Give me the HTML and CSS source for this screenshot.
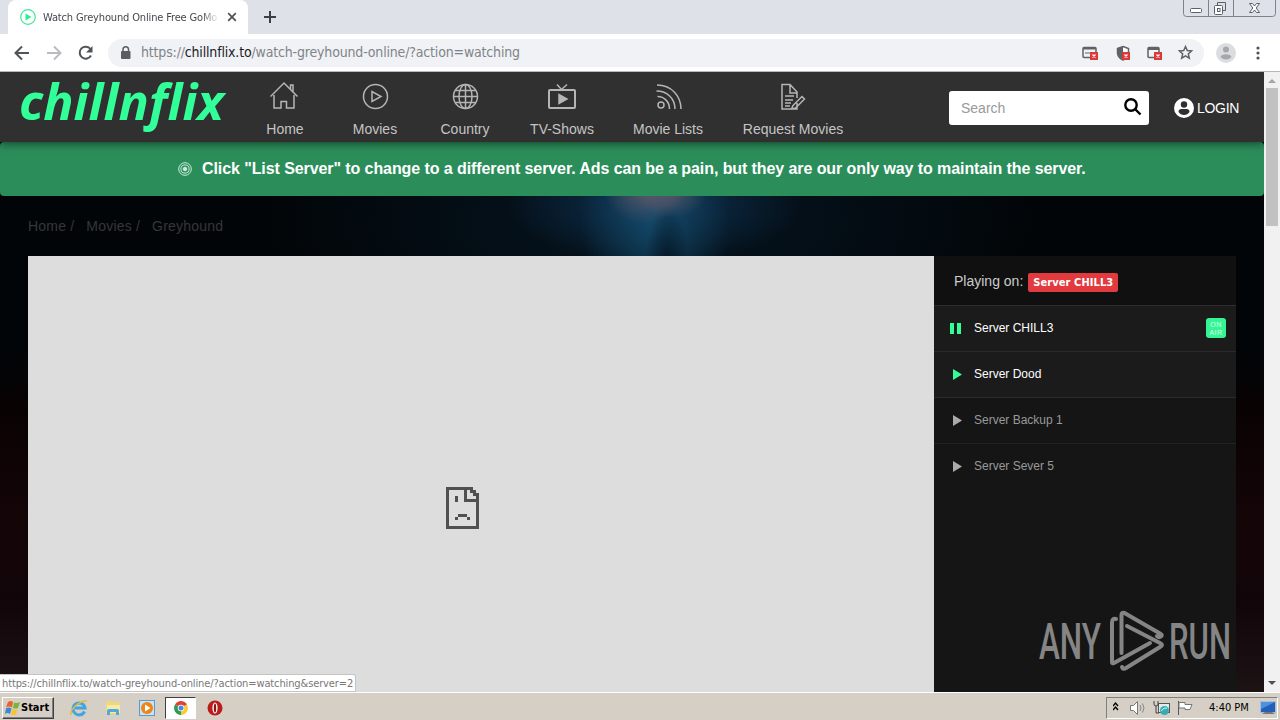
FILE: index.html
```
<!DOCTYPE html>
<html lang="en">
<head>
  <meta charset="UTF-8" />
  <meta name="viewport" content="width=device-width, initial-scale=1.0"/>
  <title>Watch Greyhound Online Free GoMovies</title>
  <link rel="stylesheet" href="styles.css">
</head>
<body>
  <!-- Tabs -->
  <div class="tabbar">
    <div class="tab">
      <svg width="16" height="16" viewBox="0 0 16 16"><circle cx="8" cy="8" r="7.3" fill="#fff" stroke="#3fe89a" stroke-width="1.2"/><path d="M5.500 4.500l6 3.500-6 3.500z" fill="#2bef94"/></svg>
      <span class="tab-title">Watch Greyhound Online Free GoMo</span>
      <svg class="tab-close" width="10" height="10" viewBox="0 0 10 10"><path d="M1.200 1.200l7.600 7.600M8.800 1.200L1.200 8.800" stroke="#50545a" stroke-width="1.800"/></svg>
    </div>
    <svg class="new-tab" width="12" height="12" viewBox="0 0 12 12"><path d="M6 0v12M0 6h12" stroke="#3c4043" stroke-width="2"/></svg>
    <svg class="window-buttons" width="94" height="18" viewBox="0 0 94 18" fill="none" stroke="#7d828b">
      <path d="M.5 0v13.500q0 3 3 3h86q3 0 3-3V0M25.500 0v16M50.500 0v16"/>
      <g stroke="#5b6069"><rect x="7.500" y="8.500" width="11" height="4" rx="1" fill="#fff"/><path d="M34.500 5.500V2.500h8v8h-3" /><rect x="31.500" y="5.500" width="8" height="9" rx="1" fill="#fff"/><rect x="34.500" y="8.500" width="2.500" height="3"/><path d="M66.500 3.500h3l2 2.500 2-2.500h3l-3.300 4.500 3.300 4.500h-3l-2-2.500-2 2.500h-3l3.300-4.500z" fill="#fff"/></g>
    </svg>
  </div>

  <!-- Address bar -->
  <div class="toolbar">
    <svg class="nav-buttons" width="92" height="20" viewBox="0 0 92 20" fill="none" stroke-width="2">
      <path d="M15 10H2M8 3.500L1.500 10 8 16.500" stroke="#505357"/>
      <path d="M33 10h13M40 3.500l6.500 6.500-6.500 6.500" stroke="#b9bbbe"/>
      <path d="M76.500 6A6 6 0 1 0 77 12.500" stroke="#505357"/><path d="M78.500 3v6.500h-6.500z" fill="#505357"/>
    </svg>
    <div class="address">
      <svg width="10" height="13" viewBox="0 0 10 13"><rect y="5" width="9.500" height="8" rx="1" fill="#5a5d61"/><path d="M2 6V3.500a2.750 2.750 0 0 1 5.500 0V6" fill="none" stroke="#5a5d61" stroke-width="1.500"/></svg>
      <span class="url">https://<b>chillnflix.to</b>/watch-greyhound-online/?action=watching</span>
      <svg class="address-icons" width="112" height="20" viewBox="0 0 112 20">
        <g fill="none" stroke="#5f6368" stroke-width="1.500"><rect x="1" y="4.500" width="13" height="10" rx="1"/><path d="M1 5.500h13" stroke-width="2"/><path d="M3 10h7" stroke-width="1"/><path d="M41 3.500l5.500 2v4c0 3.500-2 6-5.500 7.500-3.500-1.500-5.500-4-5.500-7.500v-4z" fill="#fff"/><rect x="66" y="4.500" width="11" height="10" rx="1"/><path d="M66 5.500h11" stroke-width="3"/></g>
        <path d="M41 3.500v13c-3.500-1.500-5.500-4-5.500-7.500v-4z" fill="#5f6368"/>
        <g fill="#d93c38"><rect x="8" y="9" width="8" height="8"/><rect x="40" y="9" width="8" height="8"/><rect x="72" y="9" width="8" height="8"/></g>
        <path d="M10.500 11.500l3 3m0-3l-3 3M42.500 11.500l3 3m0-3l-3 3M74.500 11.500l3 3m0-3l-3 3" stroke="#fff" stroke-width="1.200"/>
        <path d="M103.500 3.500l1.800 4 4.300.4-3.300 3 1 4.300-3.800-2.300-3.800 2.300 1-4.300-3.300-3 4.300-.4z" fill="none" stroke="#5f6368" stroke-width="1.500"/>
      </svg>
    </div>
    <svg class="profile" width="20" height="20" viewBox="0 0 20 20"><circle cx="10" cy="10" r="10" fill="#dcdde0"/><circle cx="10" cy="6.500" r="3" fill="#a5a7ab"/><path d="M4.500 14q1-2.800 5.500-2.800t5.500 2.800q-2.300 2.500-5.500 2.500T4.500 14z" fill="#a5a7ab"/></svg>
    <svg class="menu" width="4" height="14" viewBox="0 0 4 14" fill="#505357"><circle cx="2" cy="2" r="1.600"/><circle cx="2" cy="7" r="1.600"/><circle cx="2" cy="12" r="1.600"/></svg>
  </div>

  <div class="viewport">
    <div class="page">
      <header class="site-header">
        <svg class="logo" width="216" height="70" viewBox="0 0 216 70"><text x="1" y="48" textLength="205" lengthAdjust="spacingAndGlyphs">chillnflix</text></svg>
        <nav class="nav">
          <a class="nav-item">
            <svg width="30" height="30" viewBox="0 0 30 30"><path d="M.5 15.500L14 2 27.500 15.500M4 14v13h7V20.500h5.500v6.500H24V14M20.500 8V4H23v6.500"/></svg>
            Home
          </a>
          <a class="nav-item">
            <svg width="30" height="30" viewBox="0 0 30 30"><circle cx="15.500" cy="15.500" r="12"/><path d="M12 10.500v10l9-5z"/></svg>
            Movies
          </a>
          <a class="nav-item">
            <svg width="30" height="30" viewBox="0 0 30 30"><circle cx="15.500" cy="15.500" r="12"/><ellipse cx="15.500" cy="15.500" rx="6.500" ry="12"/><path d="M15.500 3.500v24M3.500 15.500h24M5.500 9.500h20M5.500 21.500h20"/></svg>
            Country
          </a>
          <a class="nav-item">
            <svg width="30" height="30" viewBox="0 0 30 30"><rect x="2" y="9" width="26" height="18" rx="1" stroke-width="2"/><path d="M10 3.500l4.500 5L20 3.500"/><path d="M12 13.500v9l8-4.500z" fill="#b5b5b5"/></svg>
            TV-Shows
          </a>
          <a class="nav-item">
            <svg width="30" height="30" viewBox="0 0 30 30"><circle cx="8" cy="24" r="3"/><path d="M4.500 15.500c7 0 12 5.500 12 12.500M3.500 10c11 0 18.500 8 18.500 18M4 4c14 0 24 10.500 24 24"/></svg>
            Movie Lists
          </a>
          <a class="nav-item">
            <svg width="30" height="30" viewBox="0 0 30 30"><path d="M19 22v6H4V3.500h8l7 7.500v6M12 4v8h7M7 15h9M7 19h8M7 22h6M7 25h5M15 24.500l9-9 2.500 2.500-9 9-4 1z"/></svg>
            Request Movies
          </a>
        </nav>
        <div class="search">
          <span>Search</span>
          <svg width="18" height="18" viewBox="0 0 18 18" fill="none" stroke="#000"><circle cx="7" cy="7" r="5.700" stroke-width="2.400"/><path d="M11 11l5.500 5.500" stroke-width="2.400"/></svg>
        </div>
        <div class="login">
          <svg width="20" height="20" viewBox="0 0 20 20"><circle cx="10" cy="10" r="10" fill="#fff"/><circle cx="10" cy="6.500" r="3.200" fill="#303030"/><path d="M4.500 14q0-3 3-3h5q3 0 3 3-2 3-5.500 3t-5.500-3z" fill="#303030"/></svg>
          LOGIN
        </div>
      </header>

      <div class="notice">
        <svg width="14" height="14" viewBox="0 0 14 14" fill="none" stroke="#cdeedc"><circle cx="7" cy="7" r="6.300"/><circle cx="7" cy="7" r="4.100"/><circle cx="7" cy="7" r="1.800" fill="#cdeedc"/></svg>
        <span>Click "List Server" to change to a different server. Ads can be a pain, but they are our only way to maintain the server.</span>
      </div>

      <div class="breadcrumb"><span>Home /</span><span>Movies /</span><span>Greyhound</span></div>

      <main class="watch">
        <div class="player">
          <svg width="34" height="42" viewBox="0 0 34 42" fill="#505050" shape-rendering="crispEdges">
            <path d="M0 0h27v3h3v3h3v36H0zM3 3v36h27V15H18V3zM21 3v9h9V9h-3V6h-3V3z" fill-rule="evenodd"/>
            <path d="M9 9h3v6H9zM12 27h9v3h-9zM9 30h3v3H9zM21 30h3v3h-3z"/>
          </svg>
        </div>
        <aside class="servers">
          <div class="playing">Playing on: <span class="badge">Server CHILL3</span></div>
          <div class="server active">
            <svg width="12" height="12" viewBox="0 0 12 12"><path d="M0 1h4v11H0zM7 1h4v11H7z"/></svg>
            <span>Server CHILL3</span>
            <span class="on-air">ON<br>AIR</span>
          </div>
          <div class="server active">
            <svg width="12" height="12" viewBox="0 0 12 12"><path d="M3 1v11l9-5.500z"/></svg>
            <span>Server Dood</span>
          </div>
          <div class="server">
            <svg width="12" height="12" viewBox="0 0 12 12"><path d="M3 1v11l9-5.500z"/></svg>
            <span>Server Backup 1</span>
          </div>
          <div class="server">
            <svg width="12" height="12" viewBox="0 0 12 12"><path d="M3 1v11l9-5.500z"/></svg>
            <span>Server Sever 5</span>
          </div>
        </aside>
      </main>
    </div>
    <div class="scrollbar">
      <svg width="8" height="4" viewBox="0 0 8 4"><path d="M0 4l4-4 4 4z" fill="#a3a3a3"/></svg>
      <div class="thumb"></div>
      <svg class="down" width="8" height="4" viewBox="0 0 8 4"><path d="M0 0l4 4 4-4z" fill="#505050"/></svg>
    </div>

    <div class="status">https://chillnflix.to/watch-greyhound-online/?action=watching&amp;server=2</div>

    <svg class="watermark" width="200" height="64" viewBox="0 0 200 64">
      <text x="1" y="49" textLength="62" lengthAdjust="spacingAndGlyphs">ANY</text>
      <g fill="none" stroke="#858585" stroke-width="4" stroke-linejoin="round" stroke-linecap="round">
        <path d="M78 9q-4-1-4 4v39q0 2 2 1l36-20"/>
        <path d="M83.500 43V5q0-3 3-2l35.500 20.500q3 1.500 1 3t-4-.5"/>
        <path d="M89 16l33 17q4 2 0 4L88 58q-3 2-4-1"/>
      </g>
      <text x="131" y="49" textLength="62" lengthAdjust="spacingAndGlyphs">RUN</text>
    </svg>
  </div>

  <!-- Taskbar -->
  <footer class="taskbar">
    <div class="start">
      <svg width="16" height="16" viewBox="0 0 16 16"><path d="M3 2q3-2 5 0L7 7.500q-3-2-6 0z" fill="#e9622c"/><path d="M9 2.500q3 1 6-.5l-2 6q-3 1-5 0z" fill="#75b63b"/><path d="M1 8.500q3-2 5.500 0L5 14q-3-2-5 0z" fill="#3e87d0"/><path d="M7.500 9q3 1.500 5 .500l-1.500 5q-3 1.500-5 0z" fill="#f5c52d"/></svg>
      Start
    </div>
    <div class="quick">
      <svg width="18" height="18" viewBox="0 0 18 18" fill="none"><path d="M14.500 12.500A6 6 0 1 1 15 9H5" stroke="#40a5e2" stroke-width="3"/><path d="M1 16C-1 11 10 1 17 2" stroke="#e6b93d" stroke-width="1.500"/></svg>
    </div>
    <div class="quick">
      <svg width="16" height="16" viewBox="0 0 16 16"><path d="M1 1h5l1 1h8v12H1z" fill="#eed77c"/><path d="M2 5h13v8H2z" fill="#f8eaa5"/><path d="M2 15v-4q0-2 2-2h8q2 0 2 2v4h-3v-3H5v3z" fill="#4ea9dd"/></svg>
    </div>
    <div class="quick">
      <svg width="16" height="16" viewBox="0 0 16 16"><rect x=".5" y=".5" width="15" height="15" fill="#c9e2f4" stroke="#5f9bc9"/><circle cx="8" cy="8" r="6" fill="#ef8519"/><path d="M6 4.500v7l5.500-3.500z" fill="#fff"/></svg>
    </div>
    <div class="quick current">
      <svg width="14" height="14" viewBox="0 0 14 14"><path d="M7 7L1 3.500A7 7 0 0 1 13 3.500z" fill="#df4234"/><path d="M7 7v7A7 7 0 0 1 1 3.500z" fill="#2f9b4b"/><path d="M7 7l6-3.500A7 7 0 0 1 7 14z" fill="#f6cb35"/><circle cx="7" cy="7" r="3.300" fill="#fff"/><circle cx="7" cy="7" r="2.500" fill="#4886e8"/></svg>
    </div>
    <div class="quick">
      <svg width="16" height="16" viewBox="0 0 16 16"><circle cx="8" cy="8" r="7.500" fill="#bd1b1b"/><ellipse cx="8" cy="8" rx="2.600" ry="5.500" fill="#fff"/><ellipse cx="8" cy="8" rx="1.200" ry="4.500" fill="#8e1414"/></svg>
    </div>
    <div class="tray">
      <svg width="82" height="18" viewBox="0 0 82 18" fill="none">
        <path d="M0 7l2.500-3L5 7M0 11l2.500-3L5 11" stroke="#000" stroke-width="1.400"/>
        <path d="M17.500 6.500h3l4-4v13l-4-4h-3z" fill="#fff" stroke="#777"/><path d="M27 6q2 3 0 6M29.500 4.500q3 4.500 0 9" stroke="#888"/>
        <rect x="45.500" y="4.500" width="11" height="9" fill="#dfe9ee" stroke="#555"/><path d="M41 2v3q0 2 2 2t2-2V2M43 7v7h3" stroke="#444"/><circle cx="51.500" cy="11.500" r="4.500" fill="#36adb0"/><path d="M48 12q3-4 6-3" stroke="#d6f4e8"/>
        <path d="M65.500 2v14" stroke="#555"/><path d="M66 3.500h6v2h7l-2 5h-5v-1.500h-6z" fill="#fff" stroke="#777"/>
      </svg>
      <span class="clock">4:40 PM</span>
      <svg width="16" height="14" viewBox="0 0 16 14"><rect x=".5" y=".5" width="15" height="11" fill="#245fb9" stroke="#a7bed8"/><path d="M1 1h14L1 8z" fill="#4f91dc"/><path d="M2 13l3-2h7l3 2z" fill="#777"/></svg>
    </div>
  </footer>
</body>
</html>
```
FILE: styles.css
```
* {
  box-sizing: border-box;
}

body {
  margin: 0;
  width: 1280px;
  height: 720px;
  overflow: hidden;
  display: flex;
  flex-direction: column;
  font-family: "Liberation Sans", Arial, sans-serif;
  font-size: 14px;
}

svg {
  display: block;
  flex: none;
}

/* Browser */
.tabbar {
  height: 34px;
  background: #dee1e8;
  display: flex;
  padding-left: 8px;
}

.tab {
  width: 240px;
  background: #fff;
  border-radius: 8px 8px 0 0;
  display: flex;
  align-items: center;
  padding: 0 11px 0 12px;
}

.tab-title {
  width: 176px;
  margin-left: 7px;
  overflow: hidden;
  white-space: nowrap;
  font: 11px "DejaVu Sans Condensed", "DejaVu Sans", sans-serif;
  letter-spacing: -0.15px;
  color: #45484d;
  -webkit-mask-image: linear-gradient(90deg, #000 90%, transparent);
}

.tab-close {
  margin-left: 8px;
}

.new-tab {
  margin: 11px 0 0 16px;
}

.window-buttons {
  margin: 0 3px 0 auto;
}

.toolbar {
  height: 38px;
  background: #fff;
  border-bottom: 1px solid #b5b7ba;
  display: flex;
  align-items: center;
}

.nav-buttons {
  margin-left: 14px;
}

.address {
  width: 1096px;
  height: 28px;
  margin-left: 2px;
  padding: 0 10px 0 13px;
  background: #f0f2f5;
  border-radius: 14px;
  display: flex;
  align-items: center;
}

.url {
  margin: -2px 0 0 10px;
  font: 14px "DejaVu Sans Condensed", "DejaVu Sans", sans-serif;
  letter-spacing: -0.17px;
  color: #808489;
}

.url b {
  font-weight: normal;
  color: #202124;
}

.address-icons {
  margin-left: auto;
}

.profile {
  margin-left: 12px;
}

.menu {
  margin-left: 20px;
}

.viewport {
  position: relative;
  height: 620px;
  display: flex;
}

.page {
  width: 1264px;
  overflow: hidden;
  background:
    radial-gradient(ellipse 40px 34px at 644px 118px, rgba(120, 95, 105, 0.7), transparent),
    radial-gradient(ellipse 36px 26px at 672px 120px, rgba(120, 95, 105, 0.6), transparent),
    radial-gradient(ellipse 22px 60px at 667px 192px, rgba(4, 16, 30, 0.8), transparent),
    radial-gradient(ellipse 75px 110px at 655px 150px, rgba(22, 85, 120, 0.7), transparent),
    radial-gradient(ellipse 150px 60px at 655px 130px, rgba(18, 62, 103, 0.7), transparent),
    radial-gradient(ellipse 390px 150px at 650px 150px, rgba(7, 29, 45, 0.7), transparent),
    linear-gradient(#020509 0, #020507 280px, #090203 340px, #140507 440px, #120509 530px, #1c1315 620px);
}

/* Header */
.site-header {
  position: relative;
  height: 70px;
  background: #303030;
  box-shadow: 0 2px 8px rgba(0, 0, 0, 0.5);
  display: flex;
}

.logo {
  margin-left: 18px;
  overflow: visible;
}

.logo text {
  font: italic bold 50px "Open Sans", sans-serif;
  fill: #33ff99;
}

.nav {
  margin-left: 6px;
  display: grid;
  grid-template-columns: 90px 90px 90px 104px 108px 142px;
}

.nav-item {
  padding-top: 9px;
  display: flex;
  flex-direction: column;
  align-items: center;
  color: #c5c5c5;
  line-height: 16px;
  white-space: nowrap;
}

.nav-item svg {
  margin-bottom: 10px;
  fill: none;
  stroke: #b5b5b5;
  stroke-width: 1.5;
}

.search {
  width: 200px;
  height: 34px;
  margin: 19px 0 0 85px;
  padding: 0 7px 3px 12px;
  background: #fff;
  border-radius: 3px;
  display: flex;
  align-items: center;
  justify-content: space-between;
  color: #999;
}

.search span {
  padding-top: 3px;
}

.login {
  height: 20px;
  margin: 26px 0 0 25px;
  display: flex;
  align-items: center;
  gap: 3px;
  color: #fff;
  letter-spacing: -0.3px;
}

.notice {
  height: 54px;
  background: #2b8d5a;
  border-radius: 4px;
  display: flex;
  align-items: center;
  padding: 0 0 1px 178px;
  gap: 10px;
  color: #fff;
  font-size: 16px;
  font-weight: bold;
  letter-spacing: -0.085px;
  white-space: nowrap;
}

.breadcrumb {
  height: 60px;
  padding-left: 28px;
  display: flex;
  align-items: center;
  gap: 12px;
  letter-spacing: 0.2px;
  color: #35363a;
}

.watch {
  display: flex;
  height: 436px;
  padding-left: 28px;
}

.player {
  width: 906px;
  padding: 231px 37px 0 0;
  background: #ddd;
  display: flex;
  justify-content: center;
}

/* Server list */
.servers {
  width: 302px;
  background: #151515;
}

.playing {
  height: 50px;
  padding: 0 0 0 20px;
  background: #101010;
  border-bottom: 1px solid #2d2d2d;
  display: flex;
  align-items: center;
  color: #ccc;
}

.badge {
  height: 19px;
  margin: 3px 0 0 5px;
  padding: 0 5px;
  background: #e13b3f;
  border-radius: 2px;
  color: #fff;
  font: bold 11px/19px "DejaVu Sans Condensed", "DejaVu Sans", sans-serif;
  letter-spacing: 0.08px;
  white-space: nowrap;
}

.server {
  height: 46px;
  padding: 0 10px 2px 16px;
  border-bottom: 1px solid #222;
  display: flex;
  align-items: center;
  gap: 12px;
  color: #999;
  fill: #aaa;
  font-size: 12px;
}

.server.active {
  background: #1b1b1b;
  border-color: #2b2b2b;
  color: #fff;
  fill: #33ff99;
}

.server:last-child {
  border: none;
}

.on-air {
  width: 20px;
  height: 20px;
  margin-left: auto;
  padding-top: 3px;
  border-radius: 3px;
  background: #33f594;
  color: #d9ffeb;
  font-size: 7px;
  line-height: 8px;
  letter-spacing: 0.5px;
  text-align: center;
}

.scrollbar {
  width: 16px;
  background: #f1f1f1;
  display: flex;
  flex-direction: column;
  align-items: center;
  padding: 7px 0;
}

.thumb {
  width: 12px;
  height: 138px;
  margin-top: 5px;
  background: #c1c1c1;
}

.down {
  margin-top: auto;
}

.status {
  position: absolute;
  left: 0;
  bottom: 0;
  width: 356px;
  height: 18px;
  padding-left: 2px;
  background: #fff;
  border: 1px solid #c4c4c4;
  border-left: none;
  border-top-right-radius: 3px;
  font: 11px/17px "DejaVu Sans Condensed", "DejaVu Sans", sans-serif;
  letter-spacing: -0.12px;
  color: #777;
  white-space: nowrap;
}

.watermark {
  position: absolute;
  left: 1038px;
  top: 538px;
  overflow: visible;
}

.watermark text {
  font: 500 50px Roboto, sans-serif;
  fill: #858585;
}

/* Taskbar */
.taskbar {
  height: 28px;
  background: #d5cfc5;
  border-top: 1px solid #fff;
  display: flex;
  align-items: center;
  padding: 2px 2px 0;
}

.start {
  width: 52px;
  height: 22px;
  padding-left: 2px;
  border: 1px solid;
  border-color: #fff #404040 #404040 #fff;
  box-shadow: inset -1px -1px #808080;
  display: flex;
  align-items: center;
  font: bold 11px "DejaVu Sans Condensed", "DejaVu Sans", sans-serif;
  margin-right: 9px;
}

.quick {
  width: 31px;
  height: 22px;
  margin-right: 3px;
  display: flex;
  align-items: center;
  justify-content: center;
}

.current {
  background: #fff;
  border: 1px solid;
  border-color: #404040 #fff #fff #404040;
}

.tray {
  width: 172px;
  height: 22px;
  margin-left: auto;
  padding: 0 2px 0 6px;
  border: 1px solid;
  border-color: #808080 #fff #fff #808080;
  display: flex;
  align-items: center;
}

.clock {
  margin: 0 11px 0 14px;
  font: 11px "DejaVu Sans Condensed", "DejaVu Sans", sans-serif;
  white-space: nowrap;
}
```
